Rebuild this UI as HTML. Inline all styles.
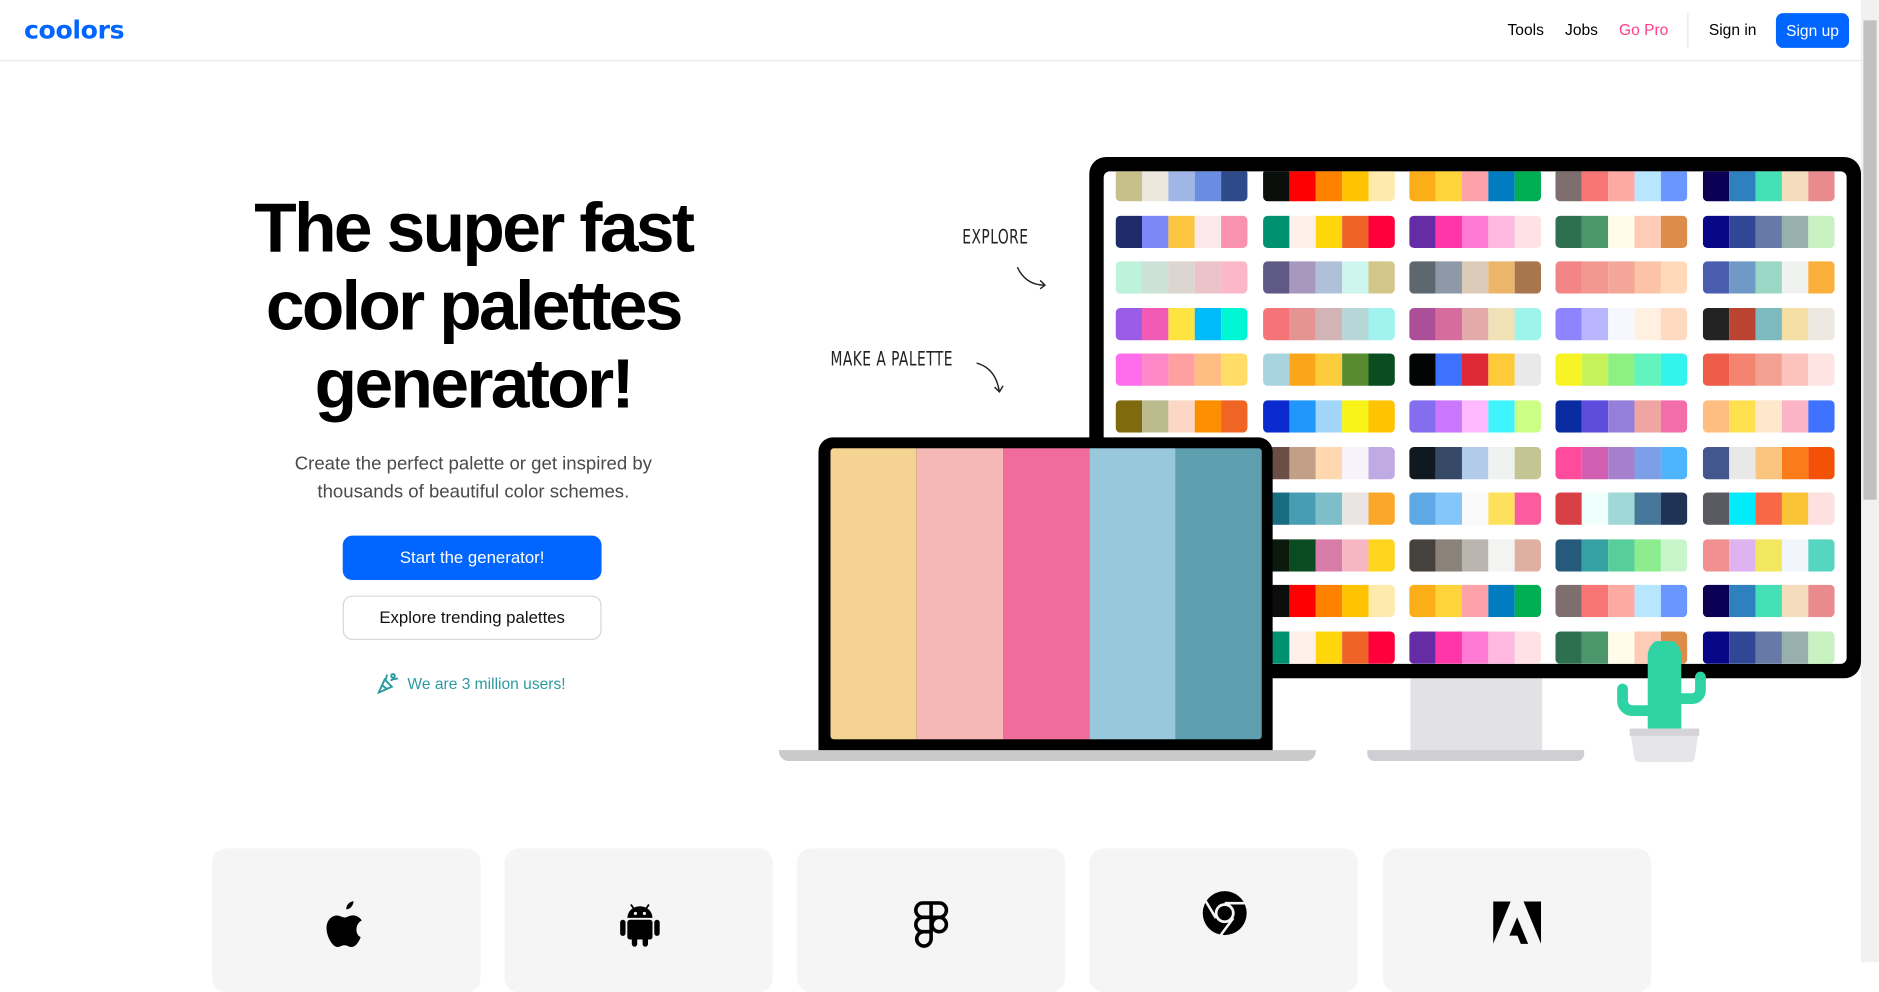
<!DOCTYPE html>
<html><head><meta charset="utf-8">
<style>
html,body{margin:0;padding:0;background:#fff;overflow:hidden;width:1879px;height:962px}
#w{position:absolute;left:0;top:0;width:1568px;height:803px;transform:scale(1.19834);transform-origin:0 0;font-family:"Liberation Sans",sans-serif;color:#000}
.a{position:absolute}
.nav{font-size:13px;color:#000;top:17px}
h1{position:absolute;left:160px;width:470px;top:158px;margin:0;text-align:center;font-size:58px;line-height:65px;font-weight:700;letter-spacing:-2.2px}
.pal{position:absolute;width:110px;height:27px;border-radius:4px;overflow:hidden;display:flex}
.pal div{flex:1}
.hand{font-family:"DejaVu Sans Condensed","Liberation Sans Narrow",sans-serif;font-size:16px;color:#222;transform:scaleX(.8);transform-origin:0 0;letter-spacing:.5px}
.card{position:absolute;top:708px;width:224px;height:120px;background:#f5f5f5;border-radius:12px}
</style></head><body><div id="w">
<div class="a" style="left:20px;top:13px;font-size:21px;font-weight:900;color:#0066ff;letter-spacing:-0.3px;font-family:'DejaVu Sans','Liberation Sans',sans-serif">coolors</div>
<div class="a nav" style="left:1258px">Tools</div>
<div class="a nav" style="left:1306px">Jobs</div>
<div class="a nav" style="left:1351px;color:#ff3d8b">Go Pro</div>
<div class="a" style="left:1408px;top:11px;width:1px;height:29px;background:#e6e6e6"></div>
<div class="a nav" style="left:1426px">Sign in</div>
<div class="a" style="left:1482px;top:11px;width:61px;height:29px;background:#0066ff;border-radius:6px;color:#fff;font-size:13px;text-align:center;line-height:29px">Sign up</div>
<div class="a" style="left:0;top:50px;width:1553px;height:1px;background:#e9e9e9"></div>
<div class="a" style="left:1553px;top:0;width:15px;height:803px;background:#f1f1f1"></div>
<div class="a" style="left:1555px;top:17px;width:11px;height:400px;background:#c1c1c1"></div>
<h1>The super fast<br>color palettes<br>generator!</h1>
<div class="a" style="left:195px;width:400px;top:376px;text-align:center;font-size:15.5px;line-height:23px;color:#4a4a4a">Create the perfect palette or get inspired by<br>thousands of beautiful color schemes.</div>
<div class="a" style="left:286px;top:447px;width:216px;height:37px;background:#0066ff;border-radius:8px;color:#fff;text-align:center;line-height:37px;font-size:14px">Start the generator!</div>
<div class="a" style="left:286px;top:497px;width:214px;height:35px;border:1px solid #d6d6d6;border-radius:8px;text-align:center;line-height:35px;font-size:14px;color:#111">Explore trending palettes</div>
<div class="a" style="left:340px;top:563px;font-size:13px;color:#2b9aa0">We are 3 million users!</div>
<svg class="a" style="left:315px;top:561px" width="18" height="18" viewBox="0 0 18 18" fill="none" stroke="#2b9aa0" stroke-width="1.6"><path d="M1 17 L6 6 L12 12 Z M4 11 L8 14 M7 6 L8 2 M11 7 C13 5 15 6 17 5"/><circle cx="13" cy="3" r="1.5"/></svg>
<div class="a hand" style="left:803px;top:188px">EXPLORE</div>
<svg class="a" style="left:846px;top:220px" width="30" height="26" viewBox="0 0 30 26" fill="none" stroke="#222" stroke-width="1.2"><path d="M3 3 C8 14 16 18 26 18 M22 14 L26 18 L22 21"/></svg>
<div class="a hand" style="left:693px;top:290px">MAKE A PALETTE</div>
<svg class="a" style="left:812px;top:300px" width="30" height="32" viewBox="0 0 30 32" fill="none" stroke="#222" stroke-width="1.2"><path d="M3 3 C14 6 20 14 22 27 M18 23 L22 27 L25 22"/></svg>
<div class="a" style="left:1177px;top:560px;width:110px;height:68px;background:#e2e2e6"></div>
<div class="a" style="left:1141px;top:626px;width:181px;height:9px;background:#cfcfd3;border-radius:0 0 6px 6px"></div>
<div class="a" style="left:909px;top:131px;width:644px;height:435px;background:#000;border-radius:14px"></div>
<div class="a" id="scr" style="left:921px;top:143px;width:620px;height:411px;background:#fff;border-radius:5px;overflow:hidden"></div>
<svg class="a" style="left:1348px;top:535px" width="78" height="102" viewBox="0 0 78 102">
<path d="M27 75 V12 a14 14 0 0 1 28 0 V75 Z" fill="#2fd3a3"/>
<path d="M28 58 H14 a8 8 0 0 1 -8 -8 V40" stroke="#2fd3a3" stroke-width="9" fill="none" stroke-linecap="round"/>
<path d="M54 48 H64 a7 7 0 0 0 7 -7 V30" stroke="#2fd3a3" stroke-width="9" fill="none" stroke-linecap="round"/>
<path d="M12 73 H70 L66 98 a4 4 0 0 1 -4 3 H20 a4 4 0 0 1 -4 -3 Z" fill="#e6e6e8"/>
<rect x="12" y="73" width="58" height="6" fill="#d4d4d8"/>
</svg>
<div class="a" style="left:683px;top:365px;width:379px;height:263px;background:#000;border-radius:12px 12px 0 0"></div>
<div class="a" style="left:693px;top:374px;width:360px;height:243px;display:flex;border-radius:3px;overflow:hidden">
<div style="flex:1;background:#f5d393"></div><div style="flex:1;background:#f6b8b5"></div><div style="flex:1;background:#f06c9b"></div><div style="flex:1;background:#98c8db"></div><div style="flex:1;background:#5d9faf"></div></div>
<div class="a" style="left:650px;top:626px;width:448px;height:9px;background:#cacaca;border-radius:0 0 8px 8px"></div>
<div class="card" style="left:177px"></div>
<div class="card" style="left:421px"></div>
<div class="card" style="left:665px"></div>
<div class="card" style="left:909px"></div>
<div class="card" style="left:1154px"></div>
<svg class="a" style="left:271px;top:752px" width="36" height="42" viewBox="0 0 24 28"><path d="M16 0c0 2-1.5 4.5-4 4.6C11.8 2.3 13.7.3 16 0zM20 20c-1 2.5-2.8 5.5-5 5.5-1.8 0-2.2-1-4-1s-2.4 1-4 1C4.5 25.5 1 20 1 15c0-4.5 3-7 5.7-7 1.8 0 3 1.1 4.3 1.1 1.2 0 2.6-1.2 4.6-1.2 1.6 0 3.7.8 5 2.8-4.2 2.3-3.5 8.3-.6 9.3z" fill="#000"/></svg>
<svg class="a" style="left:516px;top:752px" width="36" height="40" viewBox="0 0 24 26" fill="#000"><path d="M5 9 a7 6.5 0 0 1 14 0Z"/><rect x="5" y="10" width="14" height="11" rx="1.5"/><rect x="1" y="10" width="3" height="9" rx="1.5"/><rect x="20" y="10" width="3" height="9" rx="1.5"/><rect x="7.5" y="19" width="3" height="6" rx="1.5"/><rect x="13.5" y="19" width="3" height="6" rx="1.5"/><path d="M7 1.5 L9 4.5 M17 1.5 L15 4.5" stroke="#000" stroke-width="1"/><circle cx="9.5" cy="6.5" r=".9" fill="#f5f5f5"/><circle cx="14.5" cy="6.5" r=".9" fill="#f5f5f5"/></svg>
<svg class="a" style="left:761px;top:752px" width="32" height="42" viewBox="0 0 20 28" fill="none" stroke="#000" stroke-width="2"><path d="M10 1H5.5a4 4 0 0 0 0 8H10Z M10 1h4.5a4 4 0 0 1 0 8H10 M10 9H5.5a4 4 0 0 0 0 8H10Z M10 17H5.5a4 4 0 1 0 4.5 4Z"/><circle cx="14.5" cy="13" r="4"/></svg>
<svg class="a" style="left:1002px;top:742px" width="40" height="40" viewBox="0 0 24 24"><circle cx="12" cy="12" r="11" fill="#000"/><circle cx="12" cy="12" r="5" fill="#f5f5f5"/><circle cx="12" cy="12" r="3.6" fill="#000"/><path d="M12 7 H22.5 M7.6 14.5 L2.5 6 M16.3 14.5 L10 23" stroke="#f5f5f5" stroke-width="1.3"/></svg>
<svg class="a" style="left:1246px;top:752px" width="40" height="36" viewBox="0 0 26 23" fill="#000"><path d="M0 0h9.5L0 23Z M16.5 0H26v23Z M13 8.5 19 23h-4l-1.8-4.5H8.8Z"/></svg>
</div>
<script>
var P=[
[["#c8c08a","#ebe7dd","#a0b6e6","#6a8de2","#2e4a8a"],["#0b0f0c","#ff0000","#ff8100","#ffc300","#ffeaad"],["#fbae17","#ffd43a","#fda1a9","#007cc0","#00ae53"],["#7f6e6e","#f87575","#ffa9a3","#b9e6ff","#6996ff"],["#0b0054","#2f80bf","#45e0b5","#f3ddbd","#e88a8e"]],
[["#1e2c6b","#7d86f5","#fdc640","#fbe9ec","#f992ad"],["#009170","#fff0e9","#ffd50b","#f06326","#ff003c"],["#652ca6","#ff36a9","#ff7ad3","#ffb9e1","#ffe1e6"],["#2d6f4e","#4c966b","#fffcea","#fdcbb6","#dc8d49"],["#070787","#2f4794","#6679a7","#97b0ad","#c8f2c1"]],
[["#bdf2db","#cce2d7","#dcd6d0","#ebc3c9","#fbb8c8"],["#5e5a85","#a898bf","#b0c0d8","#cdf6ef","#d3c689"],["#5c6770","#8e99a8","#dccbb9","#ebb56a","#a7764d"],["#f48586","#f39791","#f4a698","#fbc3a8","#ffd9b9"],["#4a5eaf","#709ac5","#9ad8c5","#f0f2ef","#fbb03b"]],
[["#9b5de5","#f15bb5","#fee440","#00bbf9","#00f5d4"],["#f67478","#e69393","#d2b4b7","#b6d6d8","#a0f3ef"],["#ab4f99","#d66c9e","#e4aaaa","#f0e2b6","#9cf4ea"],["#8f84ff","#b9b6fd","#f7f7ff","#fff0e1","#ffd9c0"],["#232323","#bb4331","#7cbac0","#f4dea3","#ede8e0"]],
[["#ff6ded","#ff88c8","#ff9f9f","#ffbd84","#ffdd66"],["#a8d4e0","#fba619","#fdcc3c","#588b2f","#094d21"],["#030404","#3d72ff","#df2935","#ffca3a","#e9e9ea"],["#f7f324","#c6f35a","#8ff082","#61f4be","#33f3ee"],["#ef5c49","#f4836f","#f3a092","#fcc3bd","#ffe4e4"]],
[["#7f6b0d","#bbbb8e","#fcd7c6","#fb8f00","#f06424"],["#0a2ad0","#2196fb","#a2d6f9","#f8f419","#ffc300"],["#846def","#cb77fd","#fdb8ff","#3ff4fd","#ccff86"],["#0a2ca1","#5c4ddd","#967edb","#efa5a1","#f46dab"],["#ffbe81","#ffe150","#ffe8cb","#fbb4c5","#3f73ff"]],
[["#333","#666","#999","#ccc","#eee"],["#6b4f44","#c49f87","#ffd8b0","#f7f3fb","#c0aae4"],["#101820","#364966","#b3cbea","#eff3f0","#c5c594"],["#ff4b9c","#d35fb2","#a67fcd","#7d9fe7","#4cb5fe"],["#44568e","#e8e8e8","#fbc57f","#fb7b1b","#f35206"]],
[["#333","#666","#999","#ccc","#eee"],["#1a6d80","#479db3","#7ebec8","#e9e5e2","#faa72a"],["#5ea8e5","#84c6f9","#f9f9f9","#fde05c","#fb5c9e"],["#d94045","#eefffc","#a0d8d7","#467699","#1e3355"],["#5a5b61","#00ebfb","#f86746","#fbc436","#ffe0e0"]],
[["#333","#666","#999","#ccc","#eee"],["#0b1a0d","#0a4b21","#d77ca9","#f7b7c2","#fdd51d"],["#45413c","#8b8279","#bbb5af","#f3f3f1","#deb0a2"],["#255a7a","#35a1a3","#58cf9a","#8ded8e","#c8f6cb"],["#f28f8f","#dfb3f0","#f3e75f","#f3f5fc","#56d6c1"]]
];
var s=document.getElementById('scr'),h='',X=[10,133,255,377,500];
for(var r=0;r<11;r++){var row=P[r%9];for(var c=0;c<5;c++){h+='<div class="pal" style="left:'+X[c]+'px;top:'+(-2+r*38.6)+'px">';for(var k=0;k<5;k++)h+='<div style="background:'+row[c][k]+'"></div>';h+='</div>';}}
s.innerHTML=h;
</script>
</body></html>
